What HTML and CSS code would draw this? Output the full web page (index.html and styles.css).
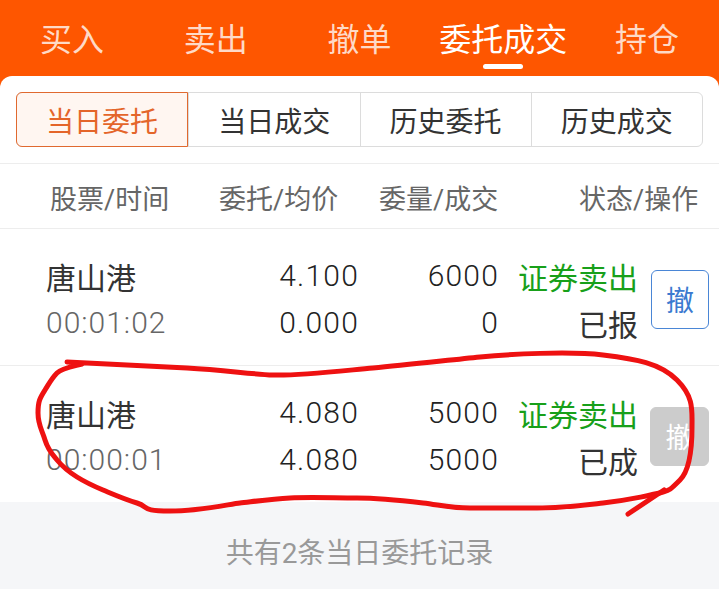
FILE: index.html
```html
<!DOCTYPE html>
<html lang="zh-CN">
<head>
<meta charset="utf-8">
<title>委托成交</title>
<link rel="stylesheet" href="styles.css">
</head>
<body>
<div class="app">
  <nav class="tabs">
    <div class="tab">买入</div>
    <div class="tab">卖出</div>
    <div class="tab">撤单</div>
    <div class="tab active">委托成交<span class="indicator"></span></div>
    <div class="tab">持仓</div>
  </nav>
  <main class="card">
    <div class="segmented">
      <div class="seg active">当日委托</div>
      <div class="seg">当日成交</div>
      <div class="seg">历史委托</div>
      <div class="seg">历史成交</div>
    </div>
    <div class="thead">
      <span>股票/时间</span>
      <span>委托/均价</span>
      <span>委量/成交</span>
      <span>状态/操作</span>
    </div>
    <div class="row">
      <span class="name">唐山港</span>
      <span class="num">4.100</span>
      <span class="num">6000</span>
      <span class="status sell">证券卖出</span>
      <button class="btn">撤</button>
      <span class="time">00:01:02</span>
      <span class="num">0.000</span>
      <span class="num">0</span>
      <span class="status">已报</span>
    </div>
    <div class="row">
      <span class="name">唐山港</span>
      <span class="num">4.080</span>
      <span class="num">5000</span>
      <span class="status sell">证券卖出</span>
      <button class="btn disabled">撤</button>
      <span class="time">00:00:01</span>
      <span class="num">4.080</span>
      <span class="num">5000</span>
      <span class="status">已成</span>
    </div>
    <footer class="foot">共有2条当日委托记录</footer>
  </main>
  <svg class="mark" viewBox="0 0 719 589" width="719" height="589" aria-hidden="true">
    <path d="M67,362 C110,364 150,366 187,368 S250,374 273,375 S340,371 373,368 S450,360 480,357 S570,351 603,355 S660,363 677,380 S692,410 692,427 S690,470 680,480 S670,490 663,492 S630,500 603,503 S560,508 537,508 S490,508 470,508 S440,505 423,503 S380,498 357,498 S310,497 290,498 S250,502 240,503 S200,511 170,511 S150,507 137,503 S115,495 103,490 S85,482 77,477 S62,466 57,460 S48,450 45,440 S38,425 38,413 S40,398 45,390 S52,378 57,373 S75,366 82,364" />
    <path d="M664,490 L628,514" />
  </svg>
</div>
</body>
</html>
```
FILE: styles.css
```css
* { box-sizing: border-box; }
html, body { margin: 0; padding: 0; }
body {
  font-family: Roboto, "Noto Sans CJK SC", "Noto Sans", sans-serif;
  background: #f5f6f8;
}
.app {
  position: relative;
  width: 719px;
  height: 589px;
  overflow: hidden;
  display: flex;
  flex-direction: column;
  background: #fe5600;
}
.tabs {
  display: grid;
  grid-template-columns: repeat(5, 1fr);
  height: 76px;
}
.tab {
  display: flex;
  flex-direction: column;
  align-items: center;
  padding-top: 16px;
  font-size: 32px;
  line-height: 48px;
  color: rgba(255, 255, 255, 0.78);
}
.tab.active { color: #fff; }
.indicator {
  display: block;
  width: 40px;
  height: 5px;
  border-radius: 3px;
  background: #fff;
}
.card {
  flex: 1;
  display: flex;
  flex-direction: column;
  background: #fff;
  border-radius: 12px 12px 0 0;
}
.segmented {
  margin: 16px 16px 0;
  height: 55px;
  display: grid;
  grid-template-columns: repeat(4, 1fr);
  border: 1px solid #dcdcdc;
  border-radius: 6px;
}
.seg {
  display: flex;
  align-items: center;
  justify-content: center;
  font-size: 28px;
  color: #333;
  border-left: 1px solid #dcdcdc;
}
.seg:first-child { border-left: none; }
.seg.active {
  margin: -1px 0 -1px -1px;
  border: 1px solid #e0692f;
  border-radius: 6px 0 0 6px;
  background: #fff6f1;
  color: #e4652a;
}
.thead {
  margin-top: 16px;
  height: 65px;
  border-top: 1px solid #ededed;
  display: grid;
  grid-template-columns: 169px 160px 200px 1fr;
  align-items: center;
  padding: 2px 0 0 50px;
  font-size: 27px;
  color: #666;
}
.row {
  display: grid;
  grid-template-columns: 1fr 98px 140px 140px 71px;
  grid-auto-rows: 47px;
  align-items: center;
  padding: 23px 10px 19px 46px;
  border-top: 1px solid #ededed;
  font-size: 30px;
  color: #333;
}
.num, .status { text-align: right; }
.num, .time { font-weight: 300; }
.num { color: #222; letter-spacing: 1.2px; margin-right: -1px; }
.time { color: #666; letter-spacing: 1px; }
.sell { color: #18a01a; }
.btn {
  grid-column: 5;
  grid-row: span 2;
  justify-self: end;
  width: 58px;
  height: 59px;
  padding: 0;
  border: 1.5px solid #4a86d6;
  border-radius: 6px;
  background: #fff;
  color: #3b7ad0;
  font-family: inherit;
  font-size: 28px;
}
.btn.disabled {
  width: 59px;
  border-color: #cccccc;
  background: #cccccc;
  color: #fff;
}
.foot {
  flex: 1;
  background: #f5f6f8;
  text-align: center;
  padding-top: 32px;
  font-size: 28px;
  line-height: 40px;
  color: #999;
}
.mark {
  position: absolute;
  left: 0;
  top: 0;
  pointer-events: none;
  fill: none;
  stroke: #ee1111;
  stroke-width: 5;
  stroke-linecap: round;
  stroke-linejoin: round;
}
```
